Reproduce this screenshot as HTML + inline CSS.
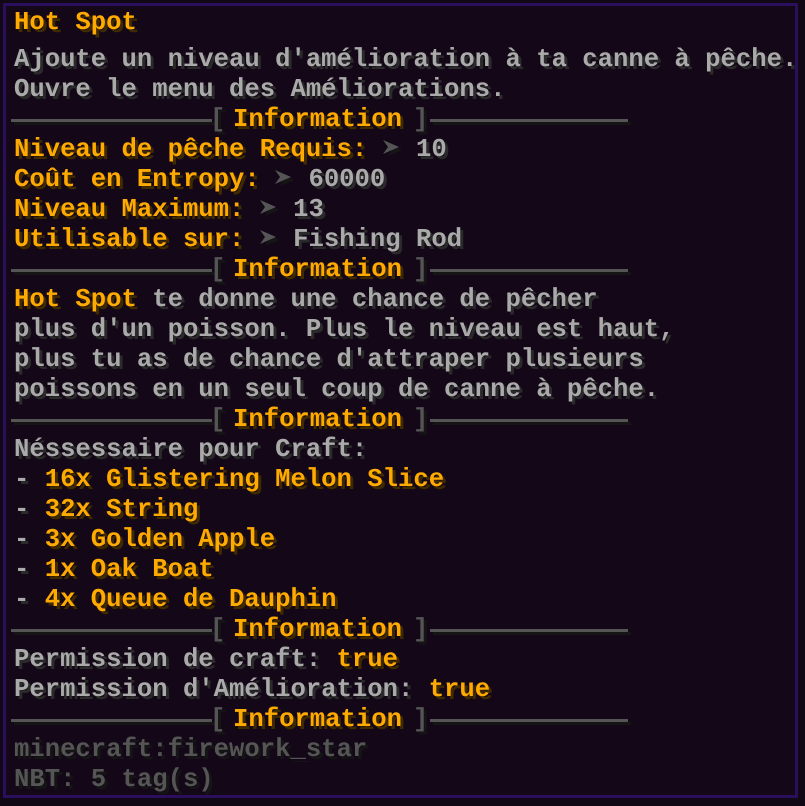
<!DOCTYPE html>
<html><head><meta charset="utf-8"><style>
html,body{margin:0;padding:0;}
body{width:805px;height:806px;background:#100814;position:relative;overflow:hidden;font-family:"Liberation Mono","DejaVu Sans Mono",monospace;font-size:25.6px;font-weight:bold;}
.box{position:absolute;left:3px;top:3px;width:795px;height:795px;background:#140818;border:3px solid #2b0f5c;box-sizing:border-box;}
.l{position:absolute;left:14px;white-space:pre;line-height:30px;color:#aaaaaa;text-shadow:3px 3px 0 #2a2a2a;}
.g{color:#ffaa00;text-shadow:3px 3px 0 #3f2a00;}
.d{color:#555555;text-shadow:3px 3px 0 #151515;}
.bar{position:absolute;height:3px;background:#555;box-shadow:3px 3px 0 #151515;}
.ar{display:inline-block;width:18px;height:20px;vertical-align:-2px;}
</style></head><body>
<div class="box"></div>
<svg width="0" height="0" style="position:absolute"><defs><symbol id="a" viewBox="0 0 18 20"><path d="M3 4 L18 10 L3 16 L7 10 Z" fill="#151515" transform="translate(2,2)"/><path d="M0 2 L16 9 L0 16 L5 9 Z" fill="#555"/></symbol></defs></svg>
<div class="l g" style="top:8px">Hot Spot</div>
<div class="l" style="top:45px">Ajoute un niveau d'amélioration à ta canne à pêche.</div>
<div class="l" style="top:75px">Ouvre le menu des Améliorations.</div>

<div class="bar" style="left:11px;width:201px;top:119px"></div>
<div class="l d" style="top:105px;left:210px">[</div><div class="l g" style="top:105px;left:233px">Information</div><div class="l d" style="top:105px;left:413px">]</div>
<div class="bar" style="left:430px;width:198px;top:119px"></div>

<div class="l" style="top:135px"><span class="g">Niveau de pêche Requis:</span> <svg class="ar"><use href="#a"/></svg> 10</div>
<div class="l" style="top:165px"><span class="g">Coût en Entropy:</span> <svg class="ar"><use href="#a"/></svg> 60000</div>
<div class="l" style="top:195px"><span class="g">Niveau Maximum:</span> <svg class="ar"><use href="#a"/></svg> 13</div>
<div class="l" style="top:225px"><span class="g">Utilisable sur:</span> <svg class="ar"><use href="#a"/></svg> Fishing Rod</div>

<div class="bar" style="left:11px;width:201px;top:269px"></div>
<div class="l d" style="top:255px;left:210px">[</div><div class="l g" style="top:255px;left:233px">Information</div><div class="l d" style="top:255px;left:413px">]</div>
<div class="bar" style="left:430px;width:198px;top:269px"></div>

<div class="l" style="top:285px"><span class="g">Hot Spot</span> te donne une chance de pêcher</div>
<div class="l" style="top:315px">plus d'un poisson. Plus le niveau est haut,</div>
<div class="l" style="top:345px">plus tu as de chance d'attraper plusieurs</div>
<div class="l" style="top:375px">poissons en un seul coup de canne à pêche.</div>

<div class="bar" style="left:11px;width:201px;top:419px"></div>
<div class="l d" style="top:405px;left:210px">[</div><div class="l g" style="top:405px;left:233px">Information</div><div class="l d" style="top:405px;left:413px">]</div>
<div class="bar" style="left:430px;width:198px;top:419px"></div>

<div class="l" style="top:435px">Néssessaire pour Craft:</div>
<div class="l" style="top:465px">- <span class="g">16x Glistering Melon Slice</span></div>
<div class="l" style="top:495px">- <span class="g">32x String</span></div>
<div class="l" style="top:525px">- <span class="g">3x Golden Apple</span></div>
<div class="l" style="top:555px">- <span class="g">1x Oak Boat</span></div>
<div class="l" style="top:585px">- <span class="g">4x Queue de Dauphin</span></div>

<div class="bar" style="left:11px;width:201px;top:629px"></div>
<div class="l d" style="top:615px;left:210px">[</div><div class="l g" style="top:615px;left:233px">Information</div><div class="l d" style="top:615px;left:413px">]</div>
<div class="bar" style="left:430px;width:198px;top:629px"></div>

<div class="l" style="top:645px">Permission de craft: <span class="g">true</span></div>
<div class="l" style="top:675px">Permission d'Amélioration: <span class="g">true</span></div>

<div class="bar" style="left:11px;width:201px;top:719px"></div>
<div class="l d" style="top:705px;left:210px">[</div><div class="l g" style="top:705px;left:233px">Information</div><div class="l d" style="top:705px;left:413px">]</div>
<div class="bar" style="left:430px;width:198px;top:719px"></div>

<div class="l d" style="top:735px">minecraft:firework_star</div>
<div class="l d" style="top:765px">NBT: 5 tag(s)</div>
</body></html>
